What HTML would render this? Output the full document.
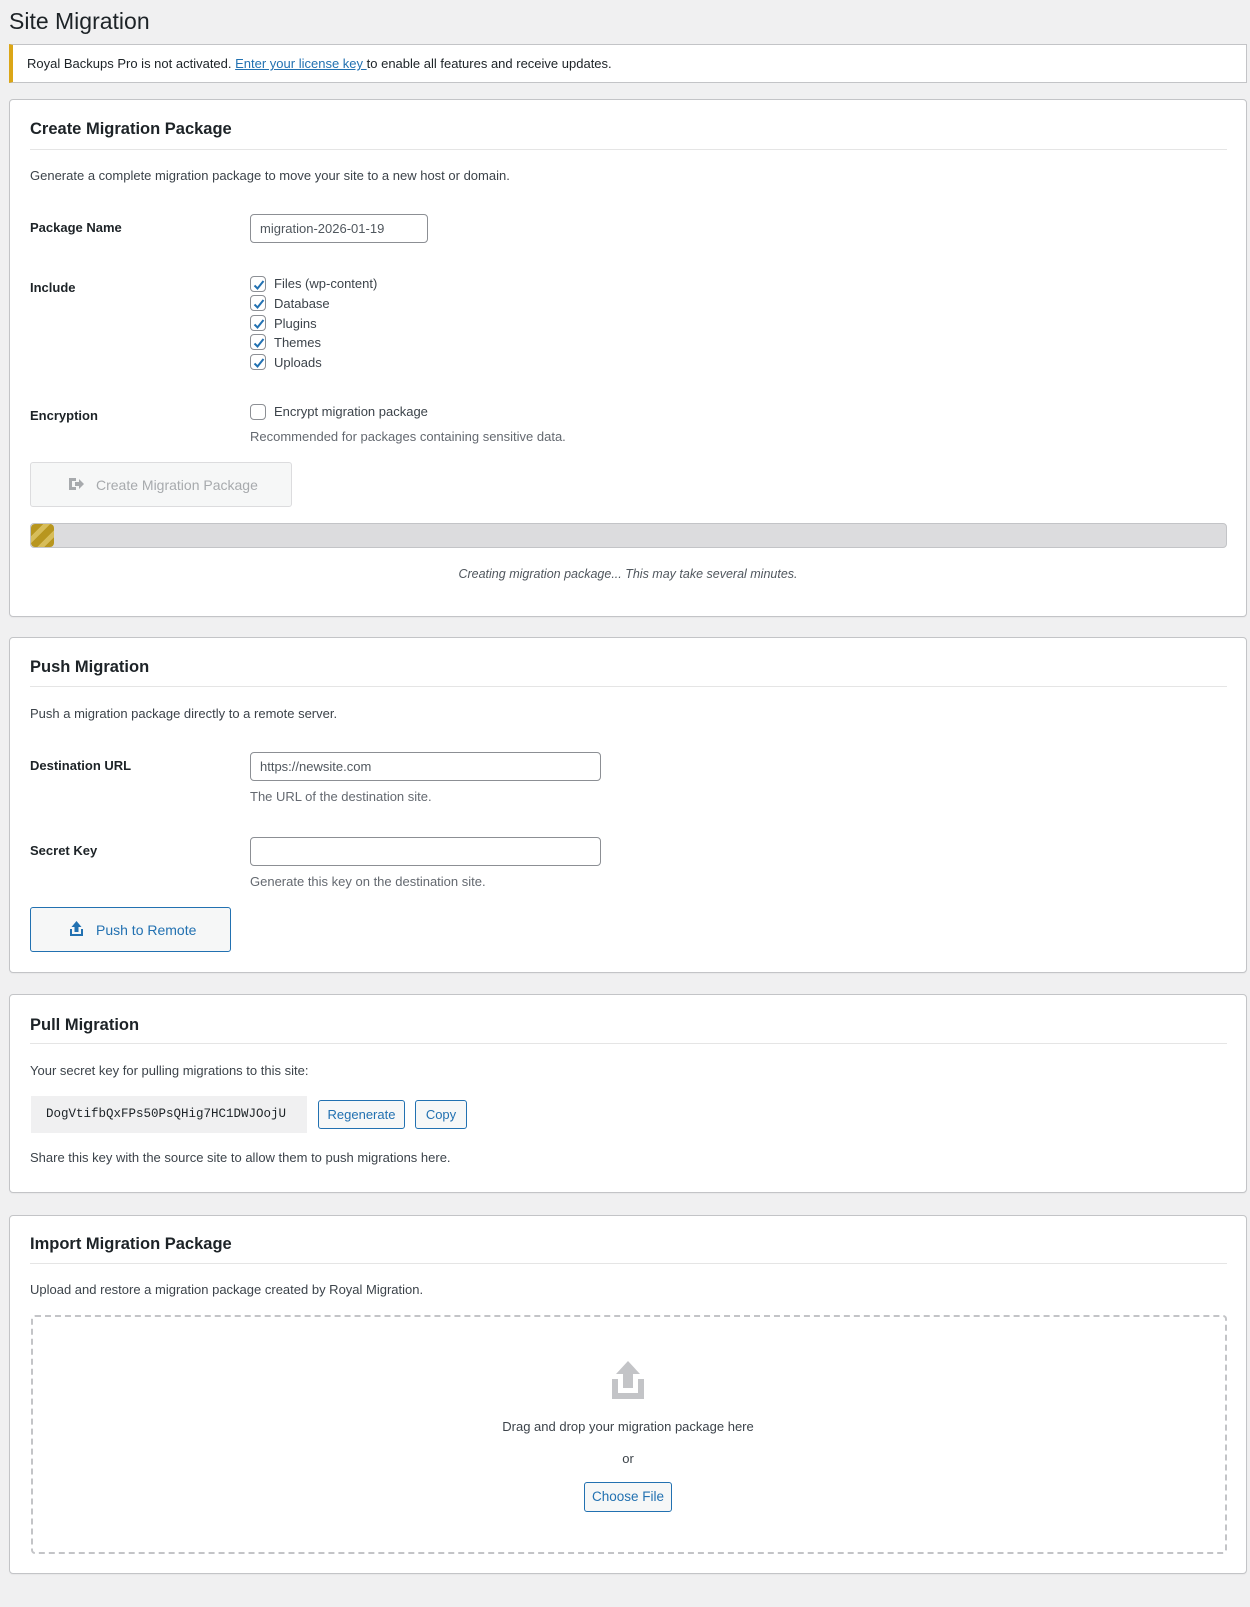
<!DOCTYPE html>
<html><head><meta charset="utf-8"><style>
*{box-sizing:border-box;margin:0;padding:0}
body{width:1250px;height:1607px;background:#f0f0f1;font-family:"Liberation Sans",sans-serif;font-size:13px;color:#3c434a;position:relative;overflow:hidden}
.a{position:absolute;line-height:16px;white-space:nowrap}
.panel{position:absolute;left:9px;width:1238px;background:#fff;border:1px solid #c3c4c7;border-radius:4px;box-shadow:0 1px 1px rgba(0,0,0,.04)}
.h2{position:absolute;font-size:16.5px;font-weight:bold;color:#1d2327;line-height:20px;left:30px}
.hr{position:absolute;left:30px;width:1197px;height:1px;background:#e5e5e5}
.lbl{font-weight:bold;color:#1d2327}
.inp{position:absolute;border:1px solid #8c8f94;border-radius:4px;background:#fff;padding-left:9px;line-height:27px;color:#50575e;font-size:13px}
.cb{position:absolute;width:16px;height:16px;border:1px solid #8c8f94;border-radius:4px;background:#fff}
.cb svg{position:absolute;left:1px;top:1px}
.help{color:#646970}
.btn{position:absolute;border:1px solid #2271b1;border-radius:3px;background:#f6f7f7;color:#2271b1;text-align:center}
</style></head><body>
<div class="a" style="left:9px;top:8px;font-size:23px;line-height:26px;color:#1d2327">Site Migration</div>

<div style="position:absolute;left:9px;top:44px;width:1238px;height:39px;background:#fff;border:1px solid #c3c4c7;border-left:4px solid #dba617"></div>
<div class="a" style="left:27px;top:56px;color:#1d2327"><span style="color:#1d2327">Royal Backups Pro</span> is not activated. <span style="color:#2271b1;text-decoration:underline">Enter your license key </span>to enable all features and receive updates.</div>

<!-- Panel 1 -->
<div class="panel" style="top:99px;height:518px"></div>
<div class="h2" style="top:119px">Create Migration Package</div>
<div class="hr" style="top:149px"></div>
<div class="a" style="left:30px;top:168px">Generate a complete migration package to move your site to a new host or domain.</div>
<div class="a lbl" style="left:30px;top:220px">Package Name</div>
<div class="inp" style="left:250px;top:214px;width:178px;height:29px">migration-2026-01-19</div>
<div class="a lbl" style="left:30px;top:280px">Include</div>
<div class="cb" style="left:250px;top:276px"><svg width="14" height="14" viewBox="0 0 14 14"><path d="M2.5 7.5l3 3 6-7.5" fill="none" stroke="#2271b1" stroke-width="2"/></svg></div>
<div class="a" style="left:274px;top:276px">Files (wp-content)</div>
<div class="cb" style="left:250px;top:295px"><svg width="14" height="14" viewBox="0 0 14 14"><path d="M2.5 7.5l3 3 6-7.5" fill="none" stroke="#2271b1" stroke-width="2"/></svg></div>
<div class="a" style="left:274px;top:296px">Database</div>
<div class="cb" style="left:250px;top:315px"><svg width="14" height="14" viewBox="0 0 14 14"><path d="M2.5 7.5l3 3 6-7.5" fill="none" stroke="#2271b1" stroke-width="2"/></svg></div>
<div class="a" style="left:274px;top:316px">Plugins</div>
<div class="cb" style="left:250px;top:334px"><svg width="14" height="14" viewBox="0 0 14 14"><path d="M2.5 7.5l3 3 6-7.5" fill="none" stroke="#2271b1" stroke-width="2"/></svg></div>
<div class="a" style="left:274px;top:335px">Themes</div>
<div class="cb" style="left:250px;top:354px"><svg width="14" height="14" viewBox="0 0 14 14"><path d="M2.5 7.5l3 3 6-7.5" fill="none" stroke="#2271b1" stroke-width="2"/></svg></div>
<div class="a" style="left:274px;top:355px">Uploads</div>
<div class="a lbl" style="left:30px;top:408px">Encryption</div>
<div class="cb" style="left:250px;top:404px"></div>
<div class="a" style="left:274px;top:404px">Encrypt migration package</div>
<div class="a help" style="left:250px;top:429px">Recommended for packages containing sensitive data.</div>
<div style="position:absolute;left:30px;top:462px;width:262px;height:45px;border:1px solid #dcdcde;border-radius:3px;background:#f6f7f7"></div>
<svg style="position:absolute;left:68px;top:477px" width="17" height="14" viewBox="0 0 17 14"><path d="M1 1h7v3H4v6h4v3H1z" fill="#a7aaad"/><path d="M7 5h4V2l5 5-5 5V9H7z" fill="#a7aaad"/></svg>
<div class="a" style="left:96px;top:477px;color:#a7aaad;font-size:14px">Create Migration Package</div>
<div style="position:absolute;left:30px;top:523px;width:1197px;height:25px;background:#dcdcde;border:1px solid #c3c4c7;border-radius:4px;overflow:hidden">
<div style="width:23px;height:100%;border-radius:4px;background:repeating-linear-gradient(-45deg,#b8961f 0 7px,#d7bd5a 7px 12px)"></div></div>
<div class="a" style="left:0;width:1256px;text-align:center;top:566px;font-style:italic;color:#50575e;font-size:12.5px">Creating migration package... This may take several minutes.</div>

<!-- Panel 2 -->
<div class="panel" style="top:637px;height:336px"></div>
<div class="h2" style="top:657px">Push Migration</div>
<div class="hr" style="top:686px"></div>
<div class="a" style="left:30px;top:706px">Push a migration package directly to a remote server.</div>
<div class="a lbl" style="left:30px;top:758px">Destination URL</div>
<div class="inp" style="left:250px;top:752px;width:351px;height:29px">https://newsite.com</div>
<div class="a help" style="left:250px;top:789px">The URL of the destination site.</div>
<div class="a lbl" style="left:30px;top:843px">Secret Key</div>
<div class="inp" style="left:250px;top:837px;width:351px;height:29px"></div>
<div class="a help" style="left:250px;top:874px">Generate this key on the destination site.</div>
<div class="btn" style="left:30px;top:907px;width:201px;height:45px"></div>
<svg style="position:absolute;left:69px;top:921px" width="15" height="16" viewBox="0 0 15 16"><path d="M7.5 0L12.5 6H9.5V11H5.5V6H2.5z" fill="#2271b1"/><path d="M1 8h2v5h9V8h2v7H1z" fill="#2271b1"/></svg>
<div class="a" style="left:96px;top:922px;color:#2271b1;font-size:14px">Push to Remote</div>

<!-- Panel 3 -->
<div class="panel" style="top:994px;height:199px"></div>
<div class="h2" style="top:1015px">Pull Migration</div>
<div class="hr" style="top:1043px"></div>
<div class="a" style="left:30px;top:1063px">Your secret key for pulling migrations to this site:</div>
<div style="position:absolute;left:31px;top:1096px;width:276px;height:37px;background:#f0f0f1"></div>
<div class="a" style="left:46px;top:1106px;font-family:'Liberation Mono',monospace;font-size:12.5px;color:#1d2327">DogVtifbQxFPs50PsQHig7HC1DWJOojU</div>
<div class="btn" style="left:318px;top:1100px;width:87px;height:29px;line-height:27px">Regenerate</div>
<div class="btn" style="left:415px;top:1100px;width:52px;height:29px;line-height:27px">Copy</div>
<div class="a" style="left:30px;top:1150px">Share this key with the source site to allow them to push migrations here.</div>

<!-- Panel 4 -->
<div class="panel" style="top:1215px;height:359px"></div>
<div class="h2" style="top:1234px">Import Migration Package</div>
<div class="hr" style="top:1263px"></div>
<div class="a" style="left:30px;top:1282px">Upload and restore a migration package created by Royal Migration.</div>
<div style="position:absolute;left:31px;top:1315px;width:1196px;height:239px;border:2px dashed #c3c4c7;border-radius:4px"></div>
<svg style="position:absolute;left:612px;top:1361px" width="32" height="38" viewBox="0 0 32 38"><path d="M16 0L28 13H21V27H11V13H4z" fill="#c3c4c7"/><path d="M0 18h6v14h20V18h6v20H0z" fill="#c3c4c7"/></svg>
<div class="a" style="left:0;width:1256px;text-align:center;top:1419px">Drag and drop your migration package here</div>
<div class="a" style="left:0;width:1256px;text-align:center;top:1451px">or</div>
<div class="btn" style="left:584px;top:1482px;width:88px;height:30px;line-height:28px;font-size:13.5px">Choose File</div>
</body></html>
